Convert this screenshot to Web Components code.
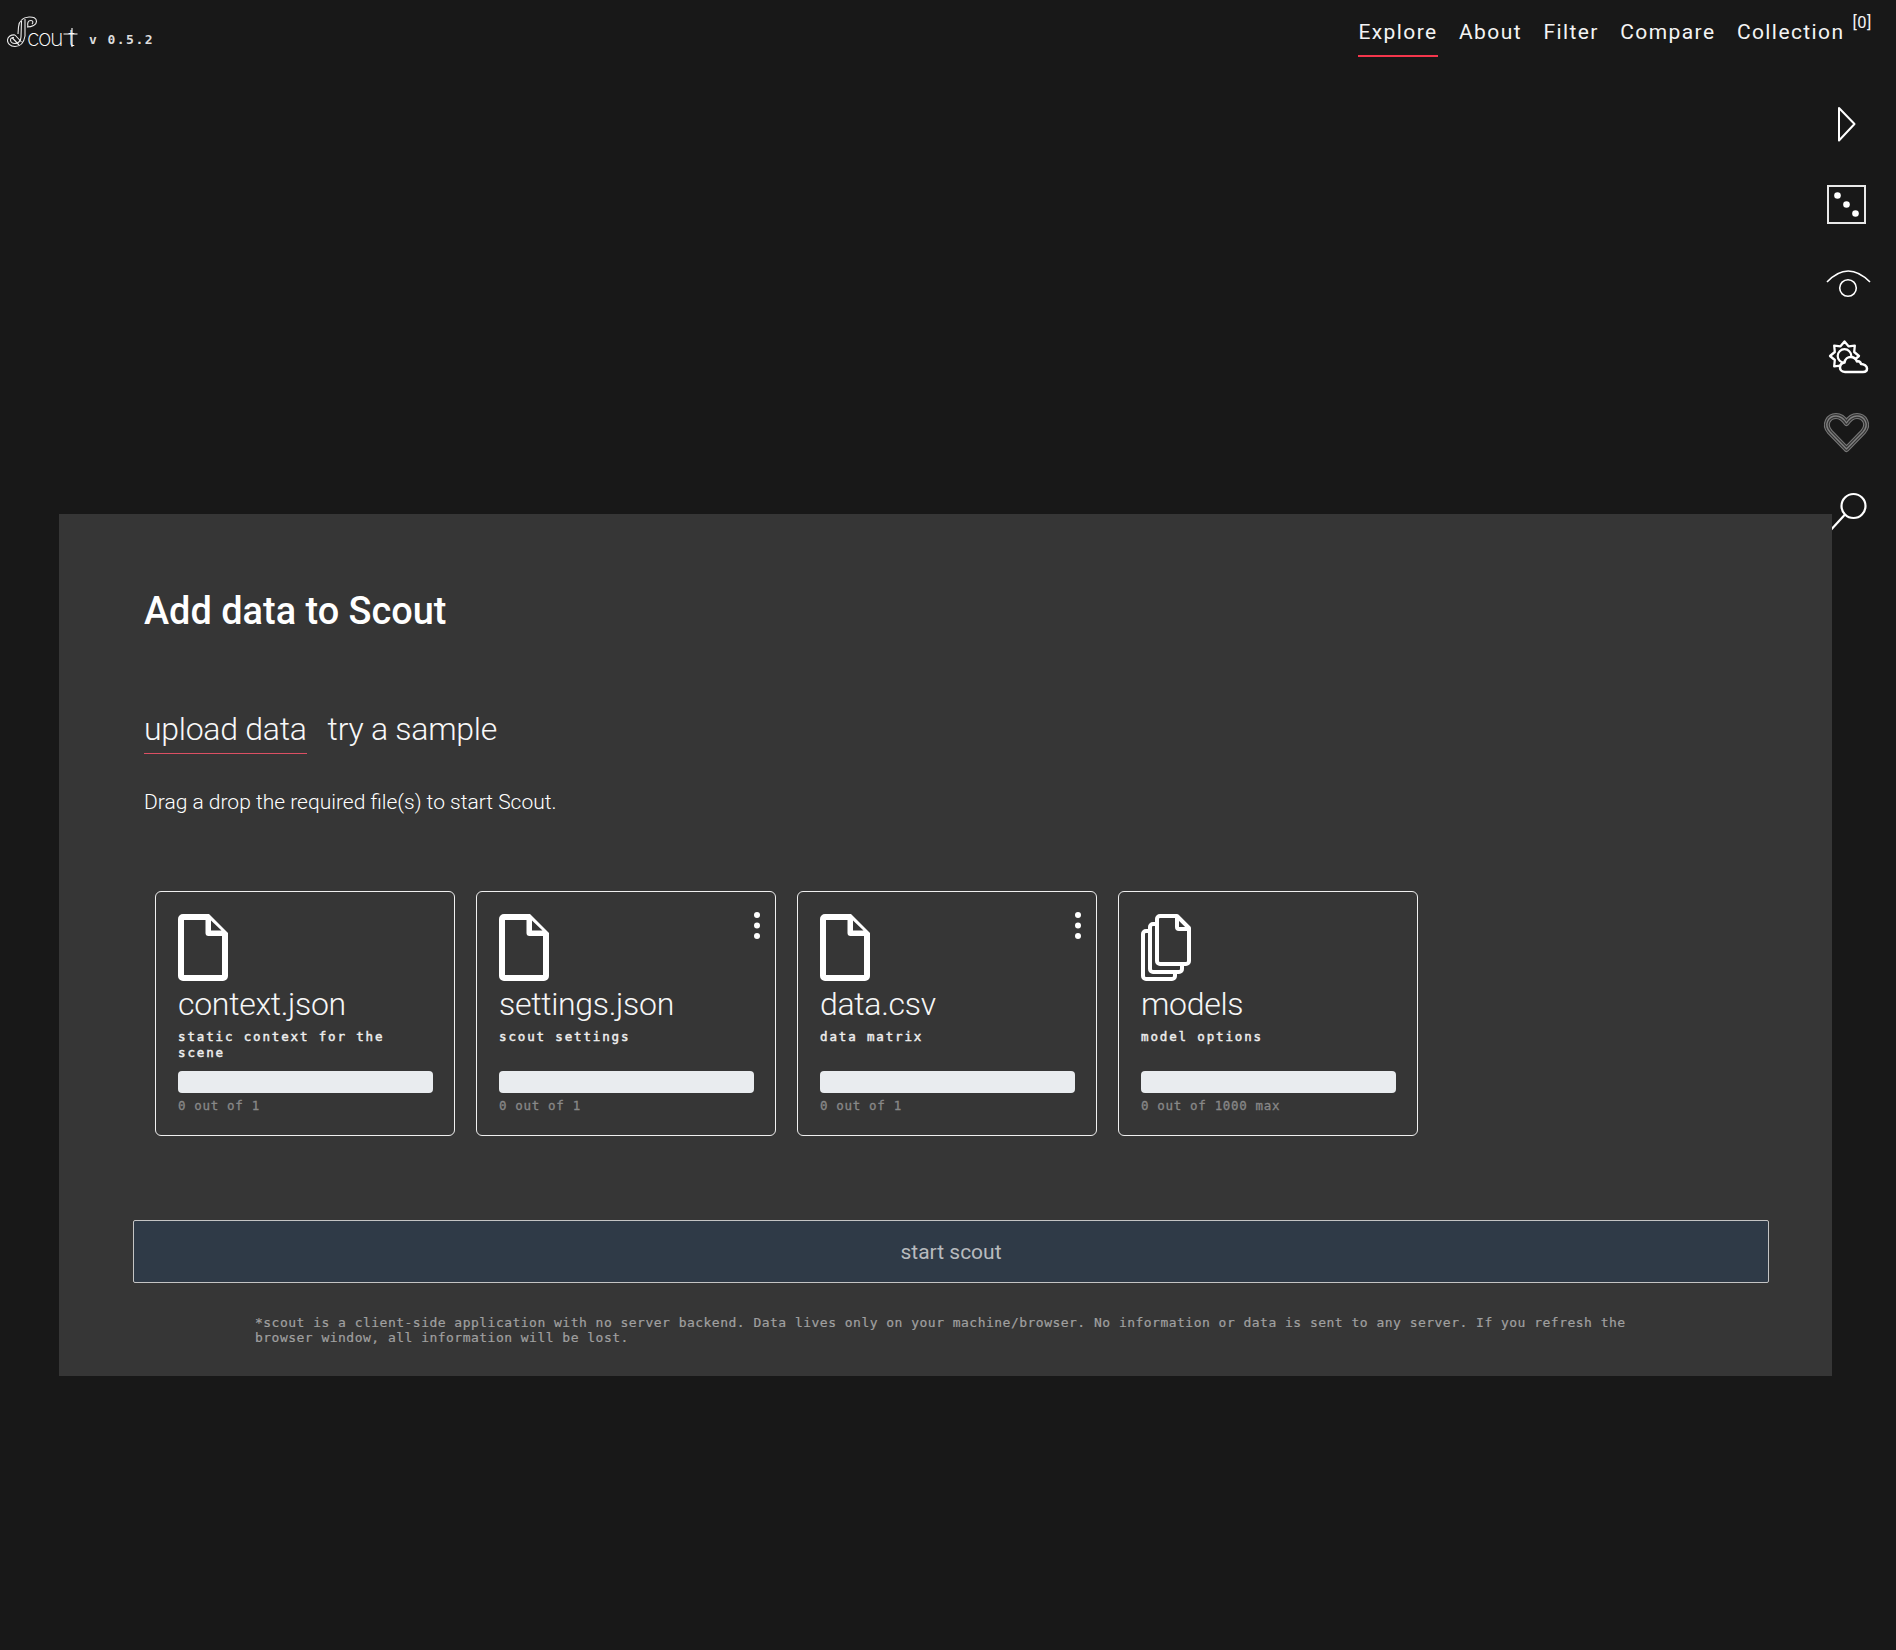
<!DOCTYPE html>
<html lang="en">
<head>
<meta charset="utf-8">
<title>Scout</title>
<style>
  html, body { margin: 0; background: #181818; }
  body { font-family: Roboto, "Liberation Sans", sans-serif; color: #fff; }
</style>
</head>
<body>
<scout-app>
  <scout-header slot="header">
    <nav-link active>Explore</nav-link>
    <nav-link>About</nav-link>
    <nav-link>Filter</nav-link>
    <nav-link>Compare</nav-link>
    <nav-link count="0">Collection</nav-link>
  </scout-header>
  <side-rail slot="rail"></side-rail>
  <data-panel slot="main" heading="Add data to Scout">
    <file-card name="context.json" desc="static context for the scene" count="0 out of 1"></file-card>
    <file-card name="settings.json" desc="scout settings" count="0 out of 1" menu></file-card>
    <file-card name="data.csv" desc="data matrix" count="0 out of 1" menu></file-card>
    <file-card name="models" desc="model options" count="0 out of 1000 max" icon="stack"></file-card>
  </data-panel>
</scout-app>

<script>
const MONO = `"DejaVu Sans Mono", "Liberation Mono", monospace`

// gear outline for the weather icon
function gearPoints(cx, cy, outer, inner, teeth) {
  const pts = []
  for (let i = 0; i < teeth * 2; i++) {
    const r = i % 2 ? inner : outer
    const a = Math.PI * i / teeth - Math.PI / 2
    pts.push((cx + r * Math.cos(a)).toFixed(1) + ',' + (cy + r * Math.sin(a)).toFixed(1))
  }
  return pts.join(' ')
}

class ScoutApp extends HTMLElement {
  connectedCallback() {
    const root = this.attachShadow({mode: 'open'})
    root.innerHTML = `<style>
        :host { display: block; position: relative; height: 1650px; overflow: hidden; }
        .main { padding: 444px 64px 0 59px; position: relative; z-index: 2; }
      </style>
      <slot name="header"></slot>
      <slot name="rail"></slot>
      <div class="main"><slot name="main"></slot></div>`
  }
}

class ScoutHeader extends HTMLElement {
  connectedCallback() {
    const root = this.attachShadow({mode: 'open'})
    root.innerHTML = `<style>
        :host { display: flex; justify-content: space-between; height: 70px; box-sizing: border-box; padding: 0 24px 0 7px; }
        .brand { display: flex; align-items: flex-start; }
        .logo { position: relative; width: 72px; height: 48px; flex: none; }
        svg { position: absolute; left: 0; top: 16px; }
        .word { position: absolute; left: 20px; top: 23px; font: 200 23px/30px Inter, Roboto, sans-serif; color: #fff; letter-spacing: -1.500px; white-space: nowrap; }
        .word b { font-weight: inherit; margin-left: 6.500px; }
        .ver { font: bold 13px/16px ${MONO}; letter-spacing: 1.450px; color: #ddd; margin: 32px 0 0 10px; }
        nav { display: flex; gap: 21.500px; align-items: flex-start; }
      </style>
      <div class="brand">
        <div class="logo">
          <span class="word">cou<b>t</b></span>
          <svg width="72" height="32" viewBox="0 0 72 32" fill="none" stroke="#ececec" stroke-width="1.100">
            <path d="M20 11C25 11 29.500 9 29.500 5.500C29.500 2 26 .8 22 1C15 1.500 12 5 11.500 11L11 18"/>
            <path d="M21 11C20 7 21 4.500 24 4.500C26 4.500 26.500 6.500 25 8"/>
            <path d="M18 3L18 20C17 26 14 30.500 8 30.500C3 30.500 .3 27 .5 24C.8 20.500 4 18.500 8 19"/>
            <path d="M14.500 5L14 21C14 25 11 27.500 8 27.500C5 27.500 3.500 25.500 3.500 24C3.500 22.500 5 21.500 7 21.500"/>
            <path d="M5 21.500L12 29M8 19L14.500 26"/>
            <!-- long stem and crossbar of the wordmark t -->
            <path d="M65 12V31M56.500 18H70.500" stroke="#fff"/>
          </svg>
        </div>
        <span class="ver">v 0.5.2</span>
      </div>
      <nav><slot></slot></nav>`
  }
}

class NavLink extends HTMLElement {
  connectedCallback() {
    const root = this.attachShadow({mode: 'open'})
    const count = this.getAttribute('count')
    root.innerHTML = `<style>
        :host { display: block; font: 400 21px/24px Roboto, sans-serif; letter-spacing: 1.400px; color: #f4f4f4; padding: 20px 0 11px; border-bottom: 2px solid transparent; white-space: nowrap; position: relative; }
        :host([active]) { border-bottom-color: #f4364c; }
        sup { font-size: 16.500px; line-height: 0; position: relative; top: -3px; vertical-align: super; margin-left: 8px; letter-spacing: .5px; }
      </style><slot></slot>${count !== null ? `<sup>[${count}]</sup>` : ''}`
  }
}

class SideRail extends HTMLElement {
  connectedCallback() {
    const root = this.attachShadow({mode: 'open'})
    const heart = 'M1846.500 449 L1830 432 C1823 424 1829 416 1836 416 C1840.500 416 1844 419 1846.500 423 C1849 419 1852.500 416 1857 416 C1864 416 1870 424 1863 432 Z'
    root.innerHTML = `<style>
        :host { display: block; position: absolute; left: 1820px; top: 100px; width: 56px; height: 440px; z-index: 1; }
        svg { display: block; position: absolute; left: 0; top: 0; }
      </style>
      <svg width="56" height="440" viewBox="1820 100 56 440" fill="none" stroke="#fff">
        <path d="M1839 108 L1854.500 124 L1839 140.500 Z" stroke-width="2" stroke-linejoin="round"/>
        <rect x="1828" y="186" width="37" height="37" stroke-width="2" stroke="#e8e8e8"/>
        <g fill="#fff" stroke="none">
          <circle cx="1837.500" cy="195.500" r="3.300"/><circle cx="1846.500" cy="204.500" r="3.300"/><circle cx="1855.500" cy="213.500" r="3.300"/>
        </g>
        <path d="M1827 282 Q1848 260 1870 282" stroke-width="1.600"/>
        <circle cx="1848" cy="288" r="8.300" stroke-width="1.600"/>
        <polygon points="${gearPoints(1844.500, 356, 14.500, 10.500, 8)}" stroke-width="2.300" stroke-linejoin="round"/>
        <circle cx="1844.500" cy="356" r="6.800" stroke-width="2.200"/>
        <path stroke-width="2.500" fill="#181818" stroke-linejoin="round" d="M1845 372C1841 372 1840 369 1840 367.500C1840 364.500 1842 363 1844.500 362.500C1845 359 1848 357 1850.500 357C1854 357 1856 359 1857 361.500C1859 361 1860.500 362 1861 364C1864 364 1867 366 1867 368.500C1867 370.500 1865.500 372 1863 372Z"/>
        <g stroke-linejoin="round">
          <path stroke="#787878" stroke-width="6" d="${heart}"/>
          <path stroke="#333" stroke-width="3.800" d="${heart}"/>
          <path stroke="#808080" stroke-width="1.400" d="${heart}"/>
        </g>
        <circle cx="1853.500" cy="506" r="12" stroke-width="2.200"/>
        <path d="M1845 514.500 L1828 533" stroke-width="2.200"/>
      </svg>`
  }
}

class DataPanel extends HTMLElement {
  connectedCallback() {
    const root = this.attachShadow({mode: 'open'})
    root.innerHTML = `<style>
        :host { display: block; background: #363636; padding: 75px 52px 24px 85px; height: 862px; box-sizing: border-box; }
        h1 { margin: 0; font: 500 37.900px/44px Roboto, sans-serif; color: #fff; }
        .tabs { display: flex; gap: 21px; margin-top: 73px; }
        .tab { font: 300 32px/46px Roboto, sans-serif; letter-spacing: -.27px; color: #f8f8f8; border-bottom: 1px solid transparent; height: 47px; }
        .tab.on { border-bottom-color: #dc4f63; }
        p { margin: 36px 0 0; font: 300 21px/24px Roboto, sans-serif; color: #fff; }
        .cards { display: flex; gap: 21px; margin: 77px 0 0 11px; }
      </style>
      <h1>${this.getAttribute('heading')}</h1>
      <div class="tabs"><div class="tab on">upload data</div><div class="tab">try a sample</div></div>
      <p>Drag a drop the required file(s) to start Scout.</p>
      <div class="cards"><slot></slot></div>
      <start-button>start scout</start-button>
      <foot-note>*scout is a client-side application with no server backend. Data lives only on your machine/browser. No information or data is sent to any server. If you refresh the browser window, all information will be lost.</foot-note>`
  }
}

class FileCard extends HTMLElement {
  connectedCallback() {
    const root = this.attachShadow({mode: 'open'})
    const doc = `<svg width="50" height="67" viewBox="0 0 50 67" fill="#fff" fill-rule="evenodd">
        <path d="M5 0H31L50 19V62a5 5 0 0 1-5 5H5a5 5 0 0 1-5-5V5a5 5 0 0 1 5-5Z M6 6V61H44V22H30.500a3 3 0 0 1-3-3V6Z M33 6.500V16.500H43.500Z"/></svg>`
    const stack = `<svg width="50" height="67" viewBox="0 0 50 67" fill="none" stroke="#fff" stroke-width="4" stroke-linejoin="round">
        <path d="M36 2H19a3 3 0 0 0-3 3V47a3 3 0 0 0 3 3H45a3 3 0 0 0 3-3V14Z"/><path d="M36 2V13a2 2 0 0 0 2 2H48"/>
        <path d="M15 10H12a3 3 0 0 0-3 3V55a3 3 0 0 0 3 3H38a3 3 0 0 0 3-3V51"/>
        <path d="M8 17H5a3 3 0 0 0-3 3V62a3 3 0 0 0 3 3H31a3 3 0 0 0 3-3V59"/></svg>`
    const menu = this.hasAttribute('menu')
      ? `<svg class="menu" width="8" height="30" viewBox="0 0 8 30" fill="#fff"><circle cx="4" cy="4" r="3"/><circle cx="4" cy="14.500" r="3"/><circle cx="4" cy="25" r="3"/></svg>` : ''
    root.innerHTML = `<style>
        :host { display: block; position: relative; width: 300px; height: 245px; box-sizing: border-box; border: 1px solid #f0f0f0; border-radius: 6px; padding: 22px 22px 0; flex: none; }
        svg { display: block; }
        .menu { position: absolute; right: 14px; top: 19px; }
        .name { margin-top: 4px; font: 300 32px/38px Roboto, sans-serif; letter-spacing: -.3px; color: #f6f6f6; white-space: nowrap; }
        .desc { margin-top: 6px; height: 32px; font: 400 12.500px/16px ${MONO}; -webkit-text-stroke: .45px #eee; letter-spacing: 1.850px; color: #eee; }
        .bar { margin-top: 10px; height: 22px; width: 255px; background: #e9ecef; border-radius: 4px; }
        .count { margin-top: 5px; font: 400 12.500px/16px ${MONO}; -webkit-text-stroke: .3px #888; letter-spacing: .66px; color: #888; white-space: nowrap; }
      </style>
      ${menu}
      ${this.getAttribute('icon') === 'stack' ? stack : doc}
      <div class="name">${this.getAttribute('name')}</div>
      <div class="desc">${this.getAttribute('desc')}</div>
      <div class="bar"></div>
      <div class="count">${this.getAttribute('count')}</div>`
  }
}

class StartButton extends HTMLElement {
  connectedCallback() {
    const root = this.attachShadow({mode: 'open'})
    root.innerHTML = `<style>
        :host { display: block; margin: 84px 0 0 -11px; width: 1636px; height: 63px; box-sizing: border-box; border: 1px solid #c4c4c4; border-radius: 2px; background: #2f3a47; color: #b8bbbe; font: 400 21px/62px Roboto, sans-serif; text-align: center; }
      </style><slot></slot>`
  }
}

class FootNote extends HTMLElement {
  connectedCallback() {
    const root = this.attachShadow({mode: 'open'})
    root.innerHTML = `<style>
        :host { display: block; margin: 32px 0 0 111px; width: 1390px; font: 13px/15px ${MONO}; -webkit-text-stroke: .2px #a0a0a0; letter-spacing: .48px; color: #a0a0a0; }
      </style><slot></slot>`
  }
}

customElements.define('scout-app', ScoutApp)
customElements.define('scout-header', ScoutHeader)
customElements.define('nav-link', NavLink)
customElements.define('side-rail', SideRail)
customElements.define('data-panel', DataPanel)
customElements.define('file-card', FileCard)
customElements.define('start-button', StartButton)
customElements.define('foot-note', FootNote)
</script>
</body>
</html>
